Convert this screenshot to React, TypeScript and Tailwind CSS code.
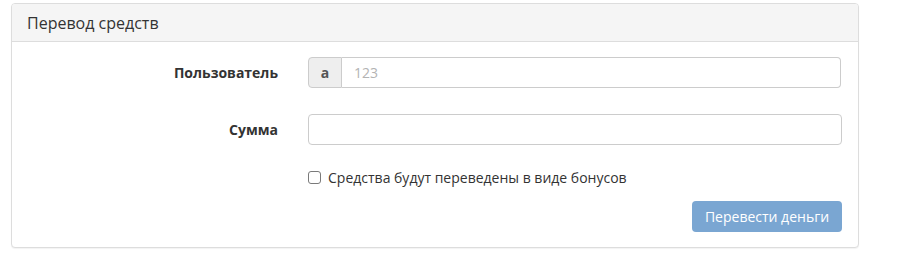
import React from "react";

export default function App() {
  return (
    <div className="w-[897px] h-[278px] bg-white" style={{ fontFamily: '"Open Sans", "Liberation Sans", sans-serif' }}>
      <div className="pt-[3px] pl-[11px]">
        <div className="w-[848px] border border-[#dddddd] rounded-[4px] shadow-[0_1px_1px_rgba(0,0,0,0.05)] bg-white">
          <div className="h-[38px] bg-[#f5f5f5] border-b border-[#dddddd] rounded-t-[3px] pl-[15px] flex items-center">
            <span className="text-[16px] text-[#333333] leading-none">Перевод средств</span>
          </div>
          <div className="pt-[15px] pb-[15px] text-[14px] text-[#333333]">
            <div className="flex items-center h-[31px]">
              <div className="w-[266px] text-right font-bold">Пользователь</div>
              <div className="ml-[30px] w-[533px] h-[31px] flex">
                <div className="w-[34px] h-full bg-[#eeeeee] border border-[#cccccc] rounded-l-[4px] flex items-center justify-center font-bold text-[#555555]">
                  a
                </div>
                <div className="flex-1 h-full border border-l-0 border-[#cccccc] rounded-r-[4px] flex items-center pl-[12px] text-[#b3b3b3]">
                  123
                </div>
              </div>
            </div>
            <div className="flex items-center h-[31px] mt-[26px]">
              <div className="w-[266px] text-right font-bold">Сумма</div>
              <div className="ml-[30px] w-[534px] h-[31px] border border-[#cccccc] rounded-[4px]" />
            </div>
            <div className="flex items-center mt-[24px] h-[16px] pl-[296px]">
              <span className="w-[13px] h-[13px] border border-[#7a7a7a] rounded-[3px] bg-white" />
              <span className="ml-[7px]">Средства будут переведены в виде бонусов</span>
            </div>
            <div className="flex justify-end pr-[16px] mt-[16px]">
              <div className="w-[150px] h-[31px] bg-[#7aa6d2] rounded-[4px] flex items-center justify-center text-white">
                Перевести деньги
              </div>
            </div>
          </div>
        </div>
      </div>
    </div>
  );
}
